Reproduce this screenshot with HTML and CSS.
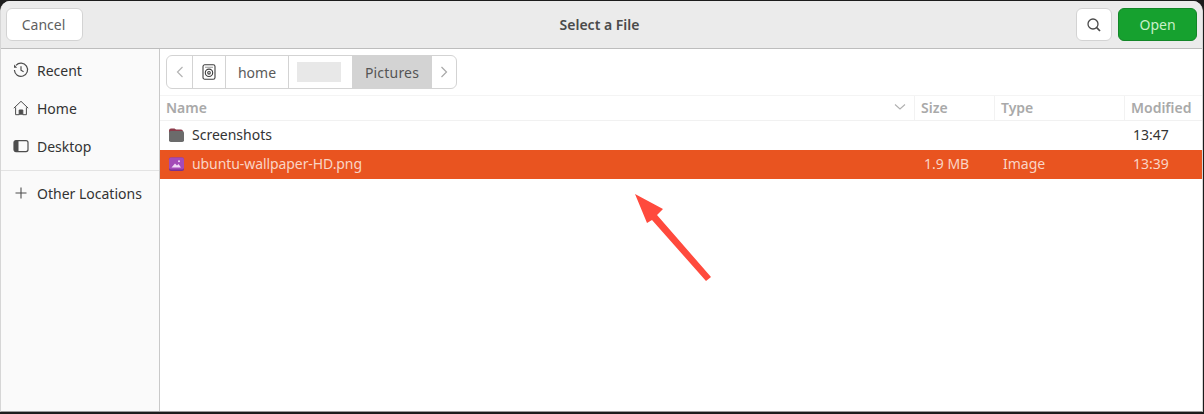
FILE: index.html
```html
<!DOCTYPE html>
<html lang="en">
<head>
<meta charset="utf-8">
<title>Select a File</title>
<link rel="stylesheet" href="styles.css">
</head>
<body>
<div class="window">
  <header class="header">
    <button class="btn cancel">Cancel</button>
    <div class="title">Select a File</div>
    <button class="btn search" aria-label="Search">
      <svg width="16" height="16" viewBox="0 0 16 16" fill="none" stroke="#4a4a4a" stroke-width="1.3"><circle cx="7" cy="7" r="5"/><path d="M10.7 10.7 14 14" stroke-width="1.7"/></svg>
    </button>
    <button class="btn open">Open</button>
  </header>
  <div class="body">
    <aside class="sidebar">
      <div class="place">
        <svg class="pi" width="16" height="16" viewBox="0 0 16 16" fill="none" stroke="#4d4d4d" stroke-width="1.2"><path d="M3 3.4A6.6 6.6 0 1 1 1.4 8"/><path d="M1 2.6v3.2h3.2z" fill="#4d4d4d" stroke="none"/><path d="M8 4.200v4l2.600 1.600"/></svg>
        <span>Recent</span>
      </div>
      <div class="place">
        <svg class="pi" width="16" height="16" viewBox="0 0 16 16" fill="none" stroke="#4d4d4d" stroke-width="1"><path d="M.8 8.200 8 1.300l7.200 6.900"/><path d="M2.600 7.400v7.300h3.600V10h3.600v4.700h3.600V7.400"/><path d="M6.200 10h3.600v4.700H6.200z" fill="#4d4d4d" stroke="none"/></svg>
        <span>Home</span>
      </div>
      <div class="place">
        <svg class="pi" width="16" height="16" viewBox="0 0 16 16" fill="none" stroke="#4d4d4d" stroke-width="1.200"><rect x="1" y="2.600" width="14" height="11" rx="2"/><path d="M1 4.600a2 2 0 0 1 2-2h2.500v11H3a2 2 0 0 1-2-2z" fill="#4d4d4d" stroke="none"/></svg>
        <span>Desktop</span>
      </div>
      <div class="place-sep"></div>
      <div class="place">
        <svg class="pi" width="16" height="16" viewBox="0 0 16 16" fill="none" stroke="#4d4d4d" stroke-width="1.100"><path d="M8 2.500v11M2.500 8h11"/></svg>
        <span>Other Locations</span>
      </div>
    </aside>
    <main class="main">
      <nav class="path">
        <div class="seg seg-back"><svg width="8" height="12" viewBox="0 0 8 12" fill="none" stroke="#b4b4b4" stroke-width="1.200"><path d="M6.500 1 1.500 6l5 5"/></svg></div>
        <div class="seg seg-disk"><svg width="14" height="16" viewBox="0 0 14 16" fill="none" stroke="#3d3d3d" stroke-width="1.100"><rect x="1" y=".8" width="12" height="14.400" rx="1.800"/><circle cx="7" cy="8.800" r="3.700"/><circle cx="7" cy="8.800" r="1.300"/><path d="M3 3.200h8" stroke="#999"/></svg></div>
        <div class="seg seg-home">home</div>
        <div class="seg seg-user"><span class="blur"></span></div>
        <div class="seg seg-current">Pictures</div>
        <div class="seg seg-next"><svg width="8" height="12" viewBox="0 0 8 12" fill="none" stroke="#a8a8a8" stroke-width="1.200"><path d="M1.500 1l5 5-5 5"/></svg></div>
      </nav>
      <div class="columns">
        <div class="col col-name">Name<svg class="sort" width="12" height="8" viewBox="0 0 12 8" fill="none" stroke="#b0b0b0" stroke-width="1.100"><path d="M1 1.500 6 6l5-4.500"/></svg></div>
        <div class="col">Size</div>
        <div class="col">Type</div>
        <div class="col">Modified</div>
      </div>
      <div class="row">
        <div class="cell-name">
          <svg width="16" height="16" viewBox="0 0 16 16"><path d="M1 3.500a2 2 0 0 1 2-2h3.500l1.500 1h5a2 2 0 0 1 2 2V7H1z" fill="#8c3b4a"/><rect x="1" y="4" width="15" height="11" rx="1.800" fill="#6b6b6b"/></svg>
          <span>Screenshots</span>
        </div>
        <div></div><div></div>
        <div class="cell-time">13:47</div>
      </div>
      <div class="row row-selected">
        <div class="cell-name">
          <svg width="16" height="16" viewBox="0 0 16 16"><rect x="1" y="1.500" width="15" height="13.500" rx="2" fill="#7a2f8f"/><rect x="1" y="1.500" width="15" height="12" rx="2" fill="#a44bb8"/><path d="M3.500 11.500 7 7.500l2 2 1.500-1.500 2.500 3.500z" fill="#f2d9f7"/><circle cx="11" cy="5.200" r="1" fill="#f2d9f7"/></svg>
          <span class="file-name">ubuntu-wallpaper-HD.png</span>
        </div>
        <div class="cell-size">1.9 MB</div>
        <div class="cell-type">Image</div>
        <div class="cell-time">13:39</div>
      </div>
    </main>
  </div>
  <svg class="arrow" width="90" height="100" viewBox="0 0 90 100"><path d="M6 4 34 19l-6 6 54 62-5 4-54-61-5 3z" fill="#ff4a3d"/></svg>
</div>
</body>
</html>
```
FILE: styles.css
```css
* { box-sizing: border-box; }
html, body { margin: 0; height: 100%; }
body {
  background: #1c1c1c;
  font-family: "Noto Sans", "Open Sans", sans-serif;
  font-size: 14px;
  color: #3d3d3d;
  overflow: hidden;
}
.window {
  position: relative;
  width: 1203px;
  height: 411px;
  margin-top: 1px;
  background: #fff;
  border-radius: 10px 10px 0 0;
  border-left: 1px solid #d6d6d6;
  border-right: 1px solid #d6d6d6;
  border-bottom: 1px solid #9a9a9a;
  display: flex;
  flex-direction: column;
  overflow: hidden;
}
.header {
  height: 48px;
  flex: none;
  display: flex;
  align-items: center;
  padding: 0 5px 0 5px;
  background: #ebebeb;
  border-bottom: 1px solid #bdbdbd;
}
.btn {
  font: inherit;
  height: 33px;
  border: 1px solid #d3d3d3;
  border-radius: 6px;
  background: #fff;
  color: #5f5f5f;
  padding: 0;
  display: flex;
  align-items: center;
  justify-content: center;
}
.cancel { width: 77px; padding-right: 2px; }
.title {
  flex: 1;
  text-align: center;
  font-weight: 600;
  color: #4a4a4a;
  padding-left: 40px;
}
.search { width: 36px; margin-right: 6px; }
.open {
  width: 79px;
  background: #16a12f;
  border-color: #128627;
  color: #c9f0c9;
}
.body { flex: 1; display: flex; min-height: 0; }
.sidebar {
  width: 159px;
  flex: none;
  background: #fafafa;
  border-right: 1px solid #c9c9c9;
  padding-top: 2px;
}
.place {
  height: 38px;
  display: flex;
  align-items: center;
  gap: 8px;
  padding-left: 12px;
  color: #333;
}
.place .pi { flex: none; }
.place-sep { height: 1px; background: #e3e3e3; margin: 5px 0 3px; }
.main { flex: 1; min-width: 0; padding-top: 6px; }
.path {
  display: flex;
  width: 291px;
  height: 34px;
  margin-left: 6px;
  border: 1px solid #d3d3d3;
  border-radius: 6px;
  overflow: hidden;
  background: #fff;
  color: #5a5a5a;
}
.seg {
  display: flex;
  align-items: center;
  justify-content: center;
  border-right: 1px solid #d3d3d3;
}
.seg-back { width: 26px; }
.seg-disk { width: 33px; }
.seg-home { width: 63px; }
.seg-user { width: 64px; }
.seg-current { width: 79px; background: #d3d3d3; color: #555; letter-spacing: .2px; }
.seg-next { width: 24px; border-right: 0; }
.blur { width: 44px; height: 20px; margin-right: 3px; background: #e8e8e8; }
.columns {
  display: grid;
  grid-template-columns: 755px 80px 130px 1fr;
  height: 26px;
  margin-top: 6px;
  border-top: 1px solid #f4f4f4;
  border-bottom: 1px solid #f1f1f1;
  color: #a9a9a9;
  font-weight: 600;
}
.col {
  display: flex;
  align-items: center;
  padding: 0 0 2px 6px;
  border-right: 1px solid #f2f2f2;
}
.col:last-child { border-right: 0; }
.col-name { justify-content: space-between; padding-right: 8px; }
.row {
  display: grid;
  grid-template-columns: 755px 80px 130px 1fr;
  height: 29px;
  padding-bottom: 2px;
  align-items: center;
  color: #333;
}
.row-selected { background: #e95420; color: #f9d5c5; }
.cell-name { display: flex; align-items: center; gap: 8px; padding-left: 8px; }
.file-name { letter-spacing: -.08px; }
.cell-size { padding-left: 9px; }
.cell-type { padding-left: 8px; }
.cell-time { padding-left: 8px; }
.arrow { position: absolute; left: 628px; top: 189px; }
```
